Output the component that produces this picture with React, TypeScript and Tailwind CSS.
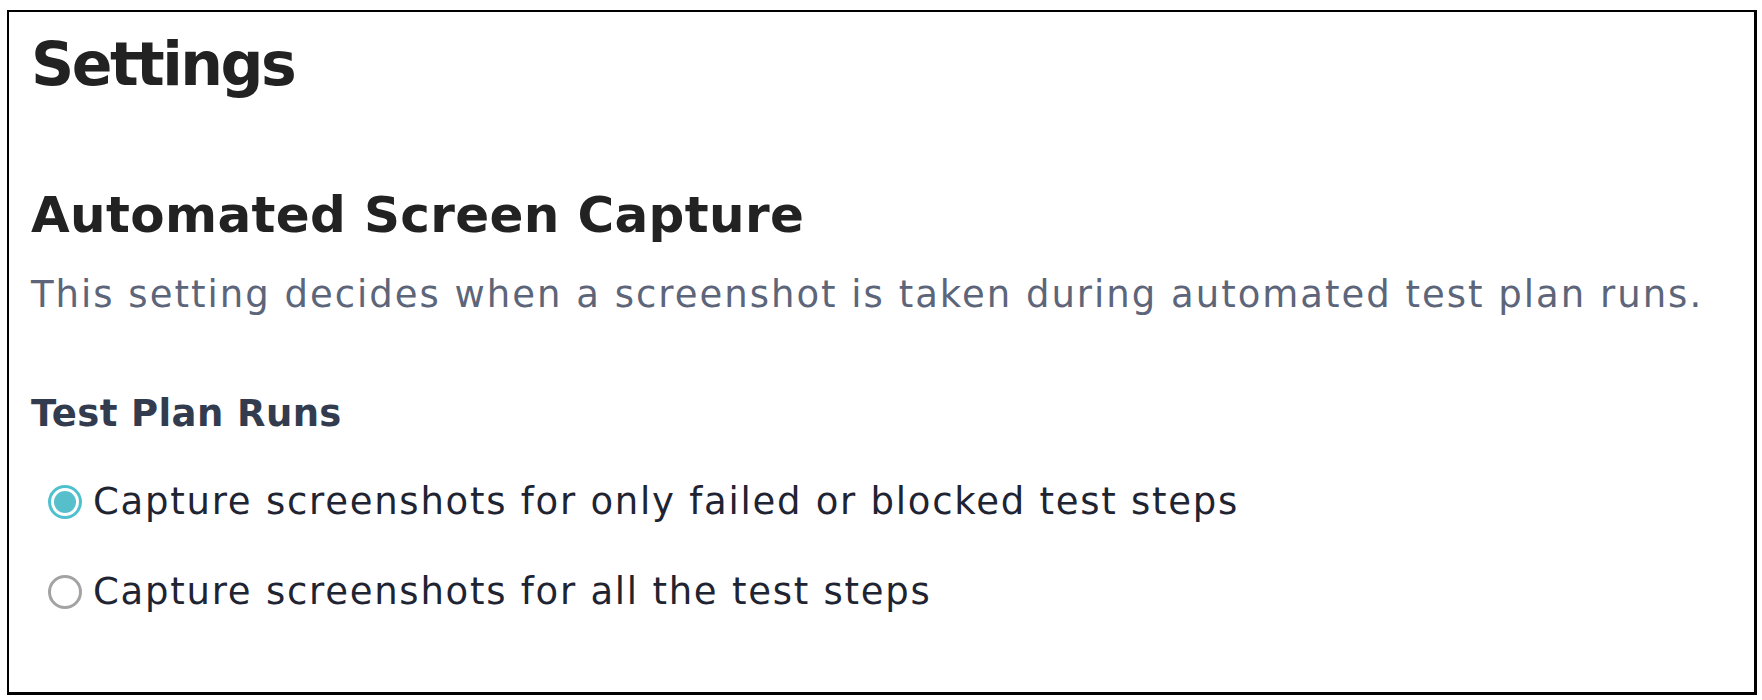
import { useState } from 'react'

const OPTIONS = [
  { id: 'failed', label: 'Capture screenshots for only failed or blocked test steps' },
  { id: 'all', label: 'Capture screenshots for all the test steps' },
] as const

type OptionId = typeof OPTIONS[number]['id']

function Radio({ checked }: { checked: boolean }) {
  return checked ? (
    <span className="flex h-[34px] w-[34px] shrink-0 items-center justify-center rounded-full border-[3px] border-[#4fc1ce] bg-white">
      <span className="h-[22px] w-[22px] rounded-full bg-[#56bfcb]" />
    </span>
  ) : (
    <span className="h-[34px] w-[34px] shrink-0 rounded-full border-[3px] border-[#a3a3a3] bg-white" />
  )
}

export default function App() {
  const [mode, setMode] = useState<OptionId>('failed')

  return (
    <div className="h-[700px] w-full bg-white pl-[7px] pr-[5px] pt-[10px] pb-[5px] font-['DejaVu_Sans',sans-serif]">
      <div className="h-full border-l-2 border-t-2 border-r-[3px] border-b-[3px] border-black pl-[22px] pt-[22px]">
        <h1 className="text-[60px] leading-[60px] font-bold tracking-[-2.5px] text-[#222222]">Settings</h1>

        <h2 className="mt-[96px] text-[50px] leading-[50px] font-bold tracking-[0.35px] text-[#222222]">
          Automated Screen Capture
        </h2>
        <p className="mt-[36px] text-[37px] leading-[37px] tracking-[2px] text-[#5c6579]">
          This setting decides when a screenshot is taken during automated test plan runs.
        </p>

        <h3 className="mt-[82px] text-[37px] leading-[37px] font-bold tracking-[0.4px] text-[#333c4e]">
          Test Plan Runs
        </h3>

        <div className="mt-[51px] flex flex-col gap-[53px] pl-[17px]">
          {OPTIONS.map((o) => (
            <label
              key={o.id}
              onClick={() => setMode(o.id)}
              className="flex cursor-pointer items-center gap-[11px] text-[37px] leading-[37px] tracking-[1.75px] text-[#1f2432]"
            >
              <Radio checked={mode === o.id} />
              <span>{o.label}</span>
            </label>
          ))}
        </div>
      </div>
    </div>
  )
}
